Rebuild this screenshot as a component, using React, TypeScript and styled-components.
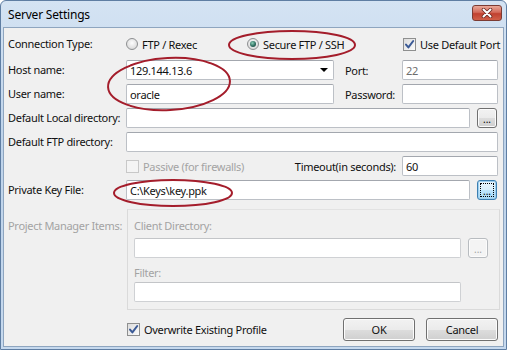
import React from "react";
import styled, { createGlobalStyle } from "styled-components";

const GlobalStyle = createGlobalStyle`
  html, body {
    margin: 0;
    padding: 0;
    background: #ffffff;
  }
  body {
    font-family: "Noto Sans", "Liberation Sans", sans-serif;
    font-size: 11px;
    letter-spacing: -0.3px;
    color: #111;
  }
`;

const Check = ({ color = "#3b5a96" }: { color?: string }) => (
  <svg width="11" height="11" viewBox="0 0 11 11">
    <path d="M2 5.6 L4.4 8.4 L9.2 2" fill="none" stroke={color} strokeWidth="2" strokeLinecap="round" strokeLinejoin="round" />
  </svg>
);

const App = () => {
  return (
    <>
      <GlobalStyle />
      <Window>
        <TitleBar>
          <Title>Server Settings</Title>
          <CloseButton>
            <svg width="14" height="10" viewBox="0 0 14 10">
              <path d="M3.5 1.5 L10.5 8.5 M10.5 1.5 L3.5 8.5" stroke="#6b2a22" strokeWidth="3.6" strokeLinecap="round" />
              <path d="M3.5 1.5 L10.5 8.5 M10.5 1.5 L3.5 8.5" stroke="#ffffff" strokeWidth="2" strokeLinecap="round" />
            </svg>
          </CloseButton>
        </TitleBar>
        <Client>
          <FirstRow>
            <Label>Connection Type:</Label>
            <Option $width={121}>
              <Radio />
              FTP / Rexec
            </Option>
            <Option $width={156}>
              <Radio $checked />
              Secure FTP / SSH
            </Option>
            <Option>
              <CheckBox>
                <Check />
              </CheckBox>
              Use Default Port
            </Option>
          </FirstRow>

          <Row>
            <Label>Host name:</Label>
            <Combo>
              129.144.13.6
              <Arrow />
            </Combo>
            <SideLabel>Port:</SideLabel>
            <TextBox readOnly defaultValue="22" $muted />
          </Row>
          <Row>
            <Label>User name:</Label>
            <TextBox readOnly defaultValue="oracle" $width={208} />
            <SideLabel>Password:</SideLabel>
            <TextBox readOnly defaultValue="" />
          </Row>
          <Row>
            <Label>Default Local directory:</Label>
            <TextBox readOnly defaultValue="" />
            <Browse>...</Browse>
          </Row>
          <Row>
            <Label>Default FTP directory:</Label>
            <TextBox readOnly defaultValue="" />
          </Row>
          <Row>
            <Indent />
            <Option $disabled>
              <CheckBox $disabled />
              Passive (for firewalls)
            </Option>
            <TimeoutLabel>Timeout(in seconds):</TimeoutLabel>
            <TextBox readOnly defaultValue="60" $width={96} />
          </Row>
          <Row>
            <Label>Private Key File:</Label>
            <TextBox readOnly defaultValue="C:\Keys\key.ppk" />
            <Browse $focused>...</Browse>
          </Row>

          <ProjectRow>
            <Label $disabled $top>
              Project Manager Items:
            </Label>
            <Panel>
              <PanelLabel>Client Directory:</PanelLabel>
              <PanelRow>
                <TextBox readOnly defaultValue="" $disabled />
                <Browse $disabled>...</Browse>
              </PanelRow>
              <PanelLabel $gap>Filter:</PanelLabel>
              <PanelRow>
                <TextBox readOnly defaultValue="" $disabled />
                <ButtonSpace />
              </PanelRow>
            </Panel>
          </ProjectRow>

          <BottomRow>
            <Indent $extra={1} />
            <Option>
              <CheckBox>
                <Check />
              </CheckBox>
              Overwrite Existing Profile
            </Option>
            <DialogButton $first>OK</DialogButton>
            <DialogButton>Cancel</DialogButton>
          </BottomRow>
        </Client>

        <Annotations width="507" height="350" viewBox="0 0 507 350">
          <ellipse cx="291" cy="44" rx="63" ry="14" />
          <ellipse cx="168" cy="83" rx="61" ry="26" transform="rotate(-3 168 83)" />
          <ellipse cx="172" cy="192" rx="59" ry="13" />
        </Annotations>
      </Window>
    </>
  );
};

export default App;

const Window = styled.div`
  position: relative;
  width: 507px;
  height: 350px;
  box-sizing: border-box;
  display: flex;
  flex-direction: column;
  padding: 0 2px 2px;
  border: 1px solid #5f7ea3;
  border-radius: 6px 6px 0 0;
  background: linear-gradient(#d4e3f3, #bed3ea 40%, #c6d9ee);
  overflow: hidden;
`;

const TitleBar = styled.div`
  height: 26px;
  display: flex;
  align-items: center;
  justify-content: space-between;
  padding: 0 2px 0 5px;
`;

const Title = styled.span`
  font-size: 12px;
  letter-spacing: -0.2px;
  color: #000;
`;

const CloseButton = styled.div`
  width: 30px;
  height: 16px;
  margin-bottom: 3px;
  box-sizing: border-box;
  display: flex;
  align-items: center;
  justify-content: center;
  border: 1px solid #7b3b33;
  border-radius: 3px;
  background: linear-gradient(#e9a999, #d36a5a 45%, #c0402f 55%, #d05f48);
`;

const Client = styled.div`
  flex: 1;
  display: flex;
  flex-direction: column;
  padding: 5px 5px 0 4px;
  background: #f0f0f0;
  border: 1px solid #8ea5bf;
`;

const Row = styled.div`
  display: flex;
  align-items: center;
  height: 24px;
`;

const FirstRow = styled(Row)`
  height: 22px;
  margin-bottom: 3px;
`;

const Label = styled.div<{ $disabled?: boolean; $top?: boolean }>`
  width: 118px;
  flex-shrink: 0;
  white-space: nowrap;
  color: ${(p) => (p.$disabled ? "#a3a3a3" : "inherit")};
  align-self: ${(p) => (p.$top ? "flex-start" : "auto")};
  padding-top: ${(p) => (p.$top ? "9px" : "0")};
  line-height: 16px;
`;

const SideLabel = styled.div`
  width: 57px;
  margin-left: 11px;
  flex-shrink: 0;
`;

const TimeoutLabel = styled.div`
  margin-left: auto;
  margin-right: 6px;
`;

const Indent = styled.div<{ $extra?: number }>`
  width: ${(p) => 118 + (p.$extra || 0)}px;
  flex-shrink: 0;
`;

const Option = styled.label<{ $width?: number; $disabled?: boolean }>`
  display: flex;
  align-items: center;
  gap: 4px;
  white-space: nowrap;
  width: ${(p) => (p.$width ? `${p.$width}px` : "auto")};
  flex-shrink: 0;
  color: ${(p) => (p.$disabled ? "#a3a3a3" : "inherit")};
`;

const Radio = styled.span<{ $checked?: boolean }>`
  position: relative;
  width: 12px;
  height: 12px;
  box-sizing: border-box;
  border-radius: 50%;
  border: 1px solid #8d8f91;
  background: radial-gradient(circle at 50% 40%, #fdfdfd, #e2e2e2 60%, #cfcfcf);

  &::after {
    content: "";
    display: ${(p) => (p.$checked ? "block" : "none")};
    position: absolute;
    left: 2px;
    top: 2px;
    width: 6px;
    height: 6px;
    border-radius: 50%;
    background: radial-gradient(circle at 40% 35%, #8ccfb8, #2e6d5f 55%, #173c3a);
  }
`;

const CheckBox = styled.span<{ $disabled?: boolean }>`
  width: 13px;
  height: 13px;
  box-sizing: border-box;
  display: flex;
  align-items: center;
  justify-content: center;
  border: 1px solid ${(p) => (p.$disabled ? "#c8c8c8" : "#8e8f8f")};
  background: ${(p) =>
    p.$disabled ? "#f4f4f4" : "linear-gradient(135deg, #dcdcdc, #fbfbfb)"};
`;

const TextBox = styled.input<{ $width?: number; $muted?: boolean; $disabled?: boolean }>`
  box-sizing: border-box;
  height: 20px;
  width: ${(p) => (p.$width ? `${p.$width}px` : "auto")};
  flex: ${(p) => (p.$width ? "0 0 auto" : "1 1 0")};
  min-width: 0;
  margin: 0;
  padding: 0 3px;
  font: inherit;
  letter-spacing: inherit;
  color: ${(p) => (p.$muted ? "#6d6d6d" : "#111")};
  background: #fff;
  border: 1px solid ${(p) => (p.$disabled ? "#cfd1d4" : "#bcc0c6")};
  border-top-color: ${(p) => (p.$disabled ? "#c3c5c8" : "#a3a7ae")};
  border-radius: 2px;
  outline: none;
`;

const Combo = styled.div`
  box-sizing: border-box;
  width: 208px;
  height: 20px;
  flex-shrink: 0;
  display: flex;
  align-items: center;
  justify-content: space-between;
  padding: 0 5px 0 3px;
  background: #fff;
  border: 1px solid #bcc0c6;
  border-top-color: #a3a7ae;
  border-radius: 2px;
`;

const Arrow = styled.span`
  width: 0;
  height: 0;
  border-left: 4px solid transparent;
  border-right: 4px solid transparent;
  border-top: 4px solid #000;
`;

const Browse = styled.div<{ $focused?: boolean; $disabled?: boolean }>`
  box-sizing: border-box;
  width: 20px;
  height: 20px;
  margin-left: 7px;
  margin-right: 1px;
  flex-shrink: 0;
  display: flex;
  align-items: center;
  justify-content: center;
  font-size: 10px;
  letter-spacing: 0;
  line-height: 1;
  padding-top: 2px;
  border-radius: 3px;
  color: ${(p) => (p.$disabled ? "#a3a3a3" : "#000")};
  border: 1px solid
    ${(p) => (p.$focused ? "#3c7fb1" : p.$disabled ? "#b8bcc0" : "#707070")};
  background: ${(p) =>
    p.$focused
      ? "linear-gradient(#eaf6fd, #d9f0fc 50%, #bee6fd 51%, #a7d9f5)"
      : p.$disabled
      ? "#f4f4f4"
      : "linear-gradient(#f2f2f2, #ebebeb 50%, #dddddd 51%, #cfcfcf)"};
  box-shadow: ${(p) => (p.$focused ? "inset 0 0 0 1px #9fd0ef" : "inset 0 0 0 1px #fcfcfc")};
  outline: ${(p) => (p.$focused ? "1px dotted #000" : "none")};
  outline-offset: -4px;
`;

const ProjectRow = styled.div`
  display: flex;
  margin-top: 7px;
`;

const Panel = styled.div`
  flex: 1;
  display: flex;
  flex-direction: column;
  margin: 0 -2px 0 1px;
  padding: 8px 10px 7px 6px;
  border: 1px solid #dadada;
  border-top-color: #e2e2e2;
`;

const PanelLabel = styled.div<{ $gap?: boolean }>`
  color: #a3a3a3;
  line-height: 16px;
  margin-top: ${(p) => (p.$gap ? "7px" : "0")};
  margin-bottom: ${(p) => (p.$gap ? "1px" : "4px")};
`;

const PanelRow = styled.div`
  display: flex;
  align-items: center;
`;

const ButtonSpace = styled.div`
  width: 28px;
  flex-shrink: 0;
`;

const BottomRow = styled.div`
  display: flex;
  align-items: center;
  margin-top: 7px;
  height: 25px;
`;

const DialogButton = styled.div<{ $first?: boolean }>`
  box-sizing: border-box;
  width: 72px;
  height: 23px;
  margin-left: ${(p) => (p.$first ? "auto" : "11px")};
  display: flex;
  align-items: center;
  justify-content: center;
  border: 1px solid #707070;
  border-radius: 3px;
  background: linear-gradient(#f2f2f2, #ebebeb 50%, #dddddd 51%, #cfcfcf);
  box-shadow: inset 0 0 0 1px #fcfcfc;
`;

const Annotations = styled.svg`
  position: absolute;
  left: 0;
  top: 0;
  pointer-events: none;

  ellipse {
    fill: none;
    stroke: #a41d2b;
    stroke-width: 2;
  }
`;
